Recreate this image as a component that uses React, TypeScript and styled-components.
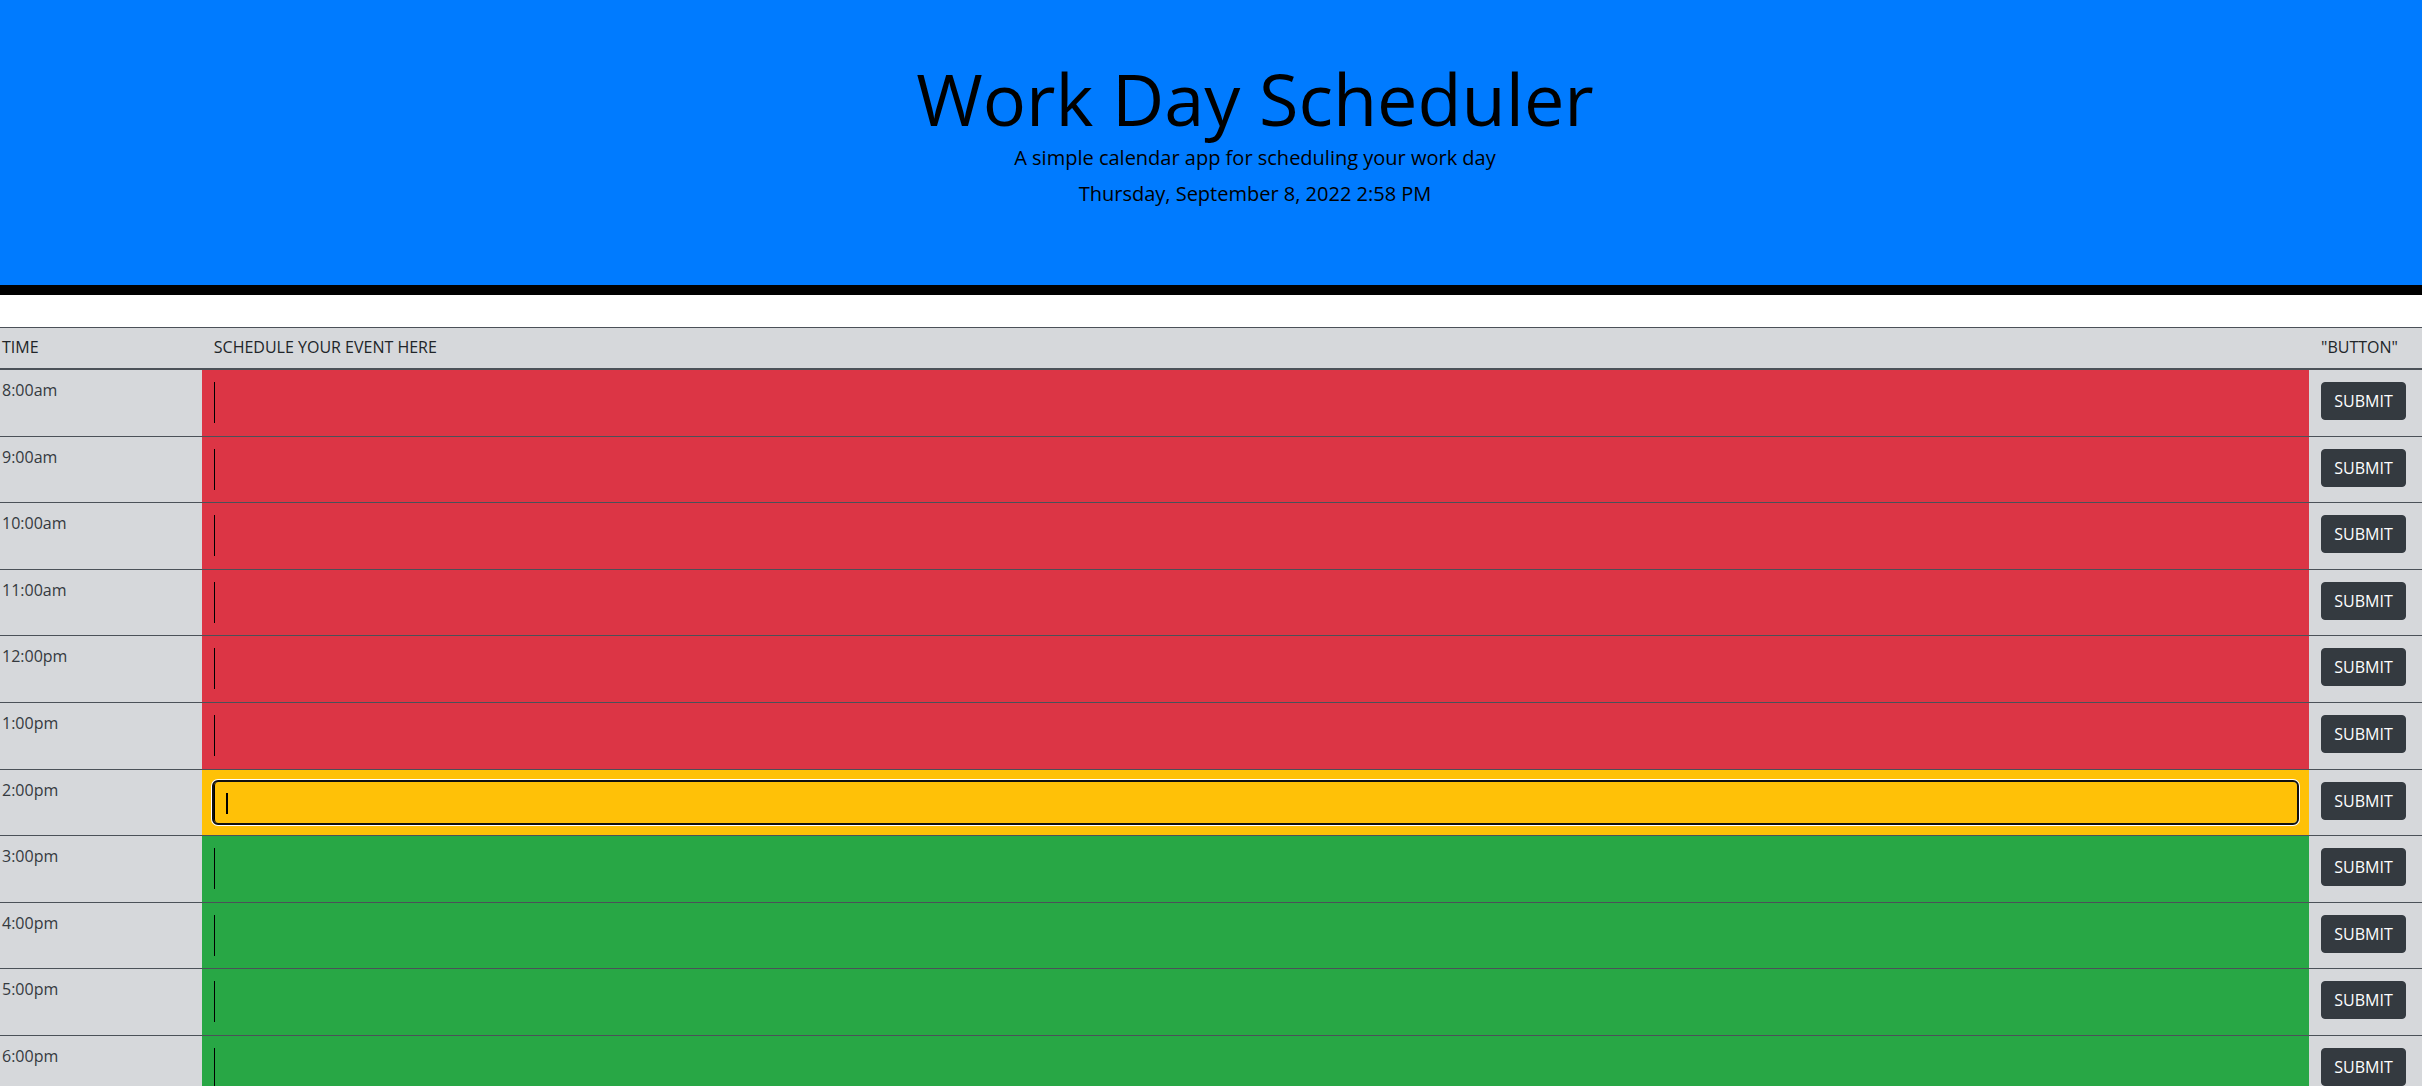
import React from "react";
import styled, { createGlobalStyle } from "styled-components";

const GlobalStyle = createGlobalStyle`
  * { box-sizing: border-box; }
  html, body { margin: 0; padding: 0; background: #fff; }
  body {
    font-family: "Open Sans", "Liberation Sans", sans-serif;
    font-size: 16px;
    line-height: 1.5;
    color: #212529;
  }
`;

const Jumbotron = styled.header`
  height: 295px;
  background: #007bff;
  border-bottom: 10px solid #000;
  padding: 55px 0 0 88px;
  display: flex;
  flex-direction: column;
  align-items: center;
  text-align: center;
  color: #000;
  font-family: "Open Sans", sans-serif;
`;

const Title = styled.h1`
  margin: 0;
  font-size: 72px;
  font-weight: 400;
  line-height: 86.4px;
`;

const Lead = styled.p<{ $gap: number }>`
  margin: ${(p) => p.$gap}px 0 0;
  font-size: 20px;
  font-weight: 400;
  line-height: 30px;
`;

const Spacer = styled.div`
  height: 32px;
`;

const Table = styled.div`
  display: grid;
  grid-template-columns: 201.8px 1fr 113px;
  background: #d6d8db;
  border-top: 1px solid #4b5158;
`;

const HeadCell = styled.div<{ $pad: number }>`
  padding: 7px 0 9px ${(p) => p.$pad}px;
  font-size: 16px;
  line-height: 24px;
  color: #212529;
  text-transform: uppercase;
  border-bottom: 2px solid #4b5158;
`;

const TimeCell = styled.div`
  padding: 8px 0 0 2px;
  height: 66.6px;
  color: #353a3f;
  font-size: 16px;
  line-height: 24px;
  border-bottom: 1px solid #4b5158;
`;

const tone = {
  past: "#dc3545",
  present: "#ffc107",
  future: "#28a745",
} as const;

type Tone = keyof typeof tone;

const EventCell = styled.div<{ $tone: Tone }>`
  position: relative;
  height: 66.6px;
  padding: 12px 12px 0;
  background: ${(p) => tone[p.$tone]};
  border-bottom: 1px solid #4b5158;
`;

const EventInput = styled.textarea<{ $active?: boolean }>`
  display: block;
  width: 100%;
  height: 41px;
  margin: 0;
  padding: 0 10px;
  resize: none;
  background: transparent;
  border: none;
  border-left: 1px solid #000;
  border-radius: ${(p) => (p.$active ? "4px" : "0")};
  font: inherit;
  color: #000;
  outline: ${(p) => (p.$active ? "2px solid #101010" : "none")};
  box-shadow: ${(p) => (p.$active ? "0 0 0 3px #fff" : "none")};
`;

const Caret = styled.span`
  position: absolute;
  left: 24px;
  top: 23px;
  width: 2px;
  height: 21px;
  background: #000;
`;

const ButtonCell = styled.div`
  height: 66.6px;
  padding: 12px 0 0 12px;
  border-bottom: 1px solid #4b5158;
`;

const SubmitButton = styled.button`
  display: block;
  width: 85px;
  height: 38px;
  padding: 0;
  border: 1px solid #343a40;
  border-radius: 4px;
  background: #343a40;
  color: #fff;
  font-family: "Open Sans", sans-serif;
  font-size: 16px;
  line-height: 24px;
  text-transform: uppercase;
  cursor: pointer;
`;

const hours: { label: string; tone: Tone }[] = [
  { label: "8:00am", tone: "past" },
  { label: "9:00am", tone: "past" },
  { label: "10:00am", tone: "past" },
  { label: "11:00am", tone: "past" },
  { label: "12:00pm", tone: "past" },
  { label: "1:00pm", tone: "past" },
  { label: "2:00pm", tone: "present" },
  { label: "3:00pm", tone: "future" },
  { label: "4:00pm", tone: "future" },
  { label: "5:00pm", tone: "future" },
  { label: "6:00pm", tone: "future" },
];

export default function App() {
  return (
    <>
      <GlobalStyle />
      <Jumbotron>
        <Title>Work Day Scheduler</Title>
        <Lead $gap={2}>A simple calendar app for scheduling your work day</Lead>
        <Lead $gap={6}>Thursday, September 8, 2022 2:58 PM</Lead>
      </Jumbotron>
      <Spacer />
      <Table>
        <HeadCell $pad={2}>Time</HeadCell>
        <HeadCell $pad={12}>Schedule your event here</HeadCell>
        <HeadCell $pad={12}>"Button"</HeadCell>
        {hours.map((h) => (
          <React.Fragment key={h.label}>
            <TimeCell>{h.label}</TimeCell>
            <EventCell $tone={h.tone}>
              <EventInput $active={h.tone === "present"} aria-label={h.label} />
              {h.tone === "present" && <Caret />}
            </EventCell>
            <ButtonCell>
              <SubmitButton>Submit</SubmitButton>
            </ButtonCell>
          </React.Fragment>
        ))}
      </Table>
    </>
  );
}
